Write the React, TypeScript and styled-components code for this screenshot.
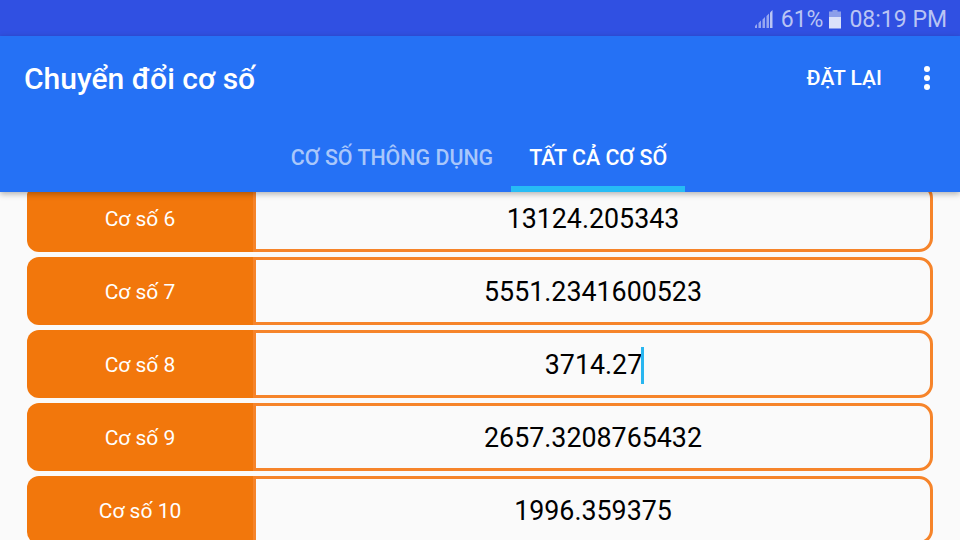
import React from "react";
import styled, { createGlobalStyle } from "styled-components";

const GlobalStyle = createGlobalStyle`
  html, body {
    margin: 0;
    padding: 0;
    background: #fafafa;
  }
  * {
    box-sizing: border-box;
  }
`;

const Screen = styled.div`
  width: 960px;
  height: 540px;
  overflow: hidden;
  display: flex;
  flex-direction: column;
  background: #fafafa;
  font-family: Roboto, "Noto Sans", sans-serif;
`;

const StatusBar = styled.div`
  height: 36px;
  flex: none;
  display: flex;
  align-items: center;
  justify-content: flex-end;
  padding: 2px 13px 0 0;
  background: #3050e2;
  color: #b9c4f4;
  font-size: 23px;
  position: relative;
  z-index: 2;
`;

const StatusText = styled.span<{ $gap: number }>`
  margin-left: ${(p) => p.$gap}px;
  line-height: 1;
`;

const Header = styled.header`
  height: 156px;
  flex: none;
  display: flex;
  flex-direction: column;
  background: #2571f5;
  box-shadow: 0 2px 6px rgba(0, 0, 0, 0.3);
  position: relative;
  z-index: 2;
`;

const Toolbar = styled.div`
  height: 84px;
  flex: none;
  display: flex;
  align-items: center;
  padding: 0 30px 0 24px;
`;

const Title = styled.h1`
  margin: 0;
  flex: 1;
  color: #fff;
  font-size: 30px;
  font-weight: 500;
`;

const ResetButton = styled.span`
  color: #fff;
  font-size: 21px;
  font-weight: 500;
  margin-right: 42px;
`;

const MoreDots = styled.div`
  display: flex;
  flex-direction: column;
  gap: 3px;
`;

const Dot = styled.span`
  width: 6px;
  height: 6px;
  border-radius: 50%;
  background: #fff;
`;

const Tabs = styled.nav`
  flex: 1;
  display: flex;
  justify-content: center;
  padding-right: 2px;
`;

const Tab = styled.div<{ $active?: boolean }>`
  height: 72px;
  padding: 8px 18px 0;
  display: flex;
  align-items: center;
  font-size: 21.4px;
  font-weight: 500;
  color: ${(p) => (p.$active ? "#fff" : "#a9c7fb")};
  border-bottom: 6px solid ${(p) => (p.$active ? "#26bcf5" : "transparent")};
`;

const List = styled.main`
  margin-top: -8px;
  padding: 0 27px;
  display: flex;
  flex-direction: column;
  gap: 5px;
  position: relative;
  z-index: 1;
`;

const Row = styled.div`
  height: 68px;
  flex: none;
  display: flex;
`;

const Label = styled.div`
  width: 226px;
  flex: none;
  display: flex;
  align-items: center;
  justify-content: center;
  padding-top: 2px;
  background: #f2770c;
  color: #fff;
  font-size: 21px;
  border-radius: 12px 0 0 12px;
`;

const Value = styled.div`
  flex: 1;
  display: flex;
  align-items: center;
  justify-content: center;
  background: #fafafa;
  border: 3px solid #f6842a;
  border-radius: 0 14px 14px 0;
  color: #000;
  font-size: 26.8px;
  padding-top: 2px;
`;

const Caret = styled.span`
  width: 3px;
  height: 37px;
  background: #29b6f0;
  margin: 0 -3px 0 -1px;
`;

const SignalIcon = () => (
  <svg width="20" height="20" viewBox="0 0 20 20" fill="#b9c4f4">
    <path d="M1 17l2-2v4H1zM4.500 14l2.500-2.500V19H4.500zM8.500 10.500L11 8v11H8.500zM12.500 7L15 4.500V19h-2.500z" opacity="0.75" />
    <path d="M16 3.500L18.500 1v18H16z" />
  </svg>
);

const BatteryIcon = () => (
  <svg width="12" height="19" viewBox="0 0 12 19" style={{ marginLeft: 6 }}>
    <path d="M3.500 0h5v2h-5z" fill="#8c9eea" />
    <path d="M0 1.500h12V7H0z" fill="#8c9eea" />
    <path d="M0 7h12v11.500H0z" fill="#dbe1fa" />
  </svg>
);

const rows = [
  { base: "Cơ số 6", value: "13124.205343" },
  { base: "Cơ số 7", value: "5551.2341600523" },
  { base: "Cơ số 8", value: "3714.27", focused: true },
  { base: "Cơ số 9", value: "2657.3208765432" },
  { base: "Cơ số 10", value: "1996.359375" },
];

const App = () => {
  return (
    <Screen>
      <GlobalStyle />
      <StatusBar>
        <SignalIcon />
        <StatusText $gap={7}>61%</StatusText>
        <BatteryIcon />
        <StatusText $gap={8}>08:19 PM</StatusText>
      </StatusBar>
      <Header>
        <Toolbar>
          <Title>Chuyển đổi cơ số</Title>
          <ResetButton>ĐẶT LẠI</ResetButton>
          <MoreDots>
            <Dot />
            <Dot />
            <Dot />
          </MoreDots>
        </Toolbar>
        <Tabs>
          <Tab>CƠ SỐ THÔNG DỤNG</Tab>
          <Tab $active>TẤT CẢ CƠ SỐ</Tab>
        </Tabs>
      </Header>
      <List>
        {rows.map((row) => (
          <Row key={row.base}>
            <Label>{row.base}</Label>
            <Value>
              {row.value}
              {row.focused && <Caret />}
            </Value>
          </Row>
        ))}
      </List>
    </Screen>
  );
};

export default App;
